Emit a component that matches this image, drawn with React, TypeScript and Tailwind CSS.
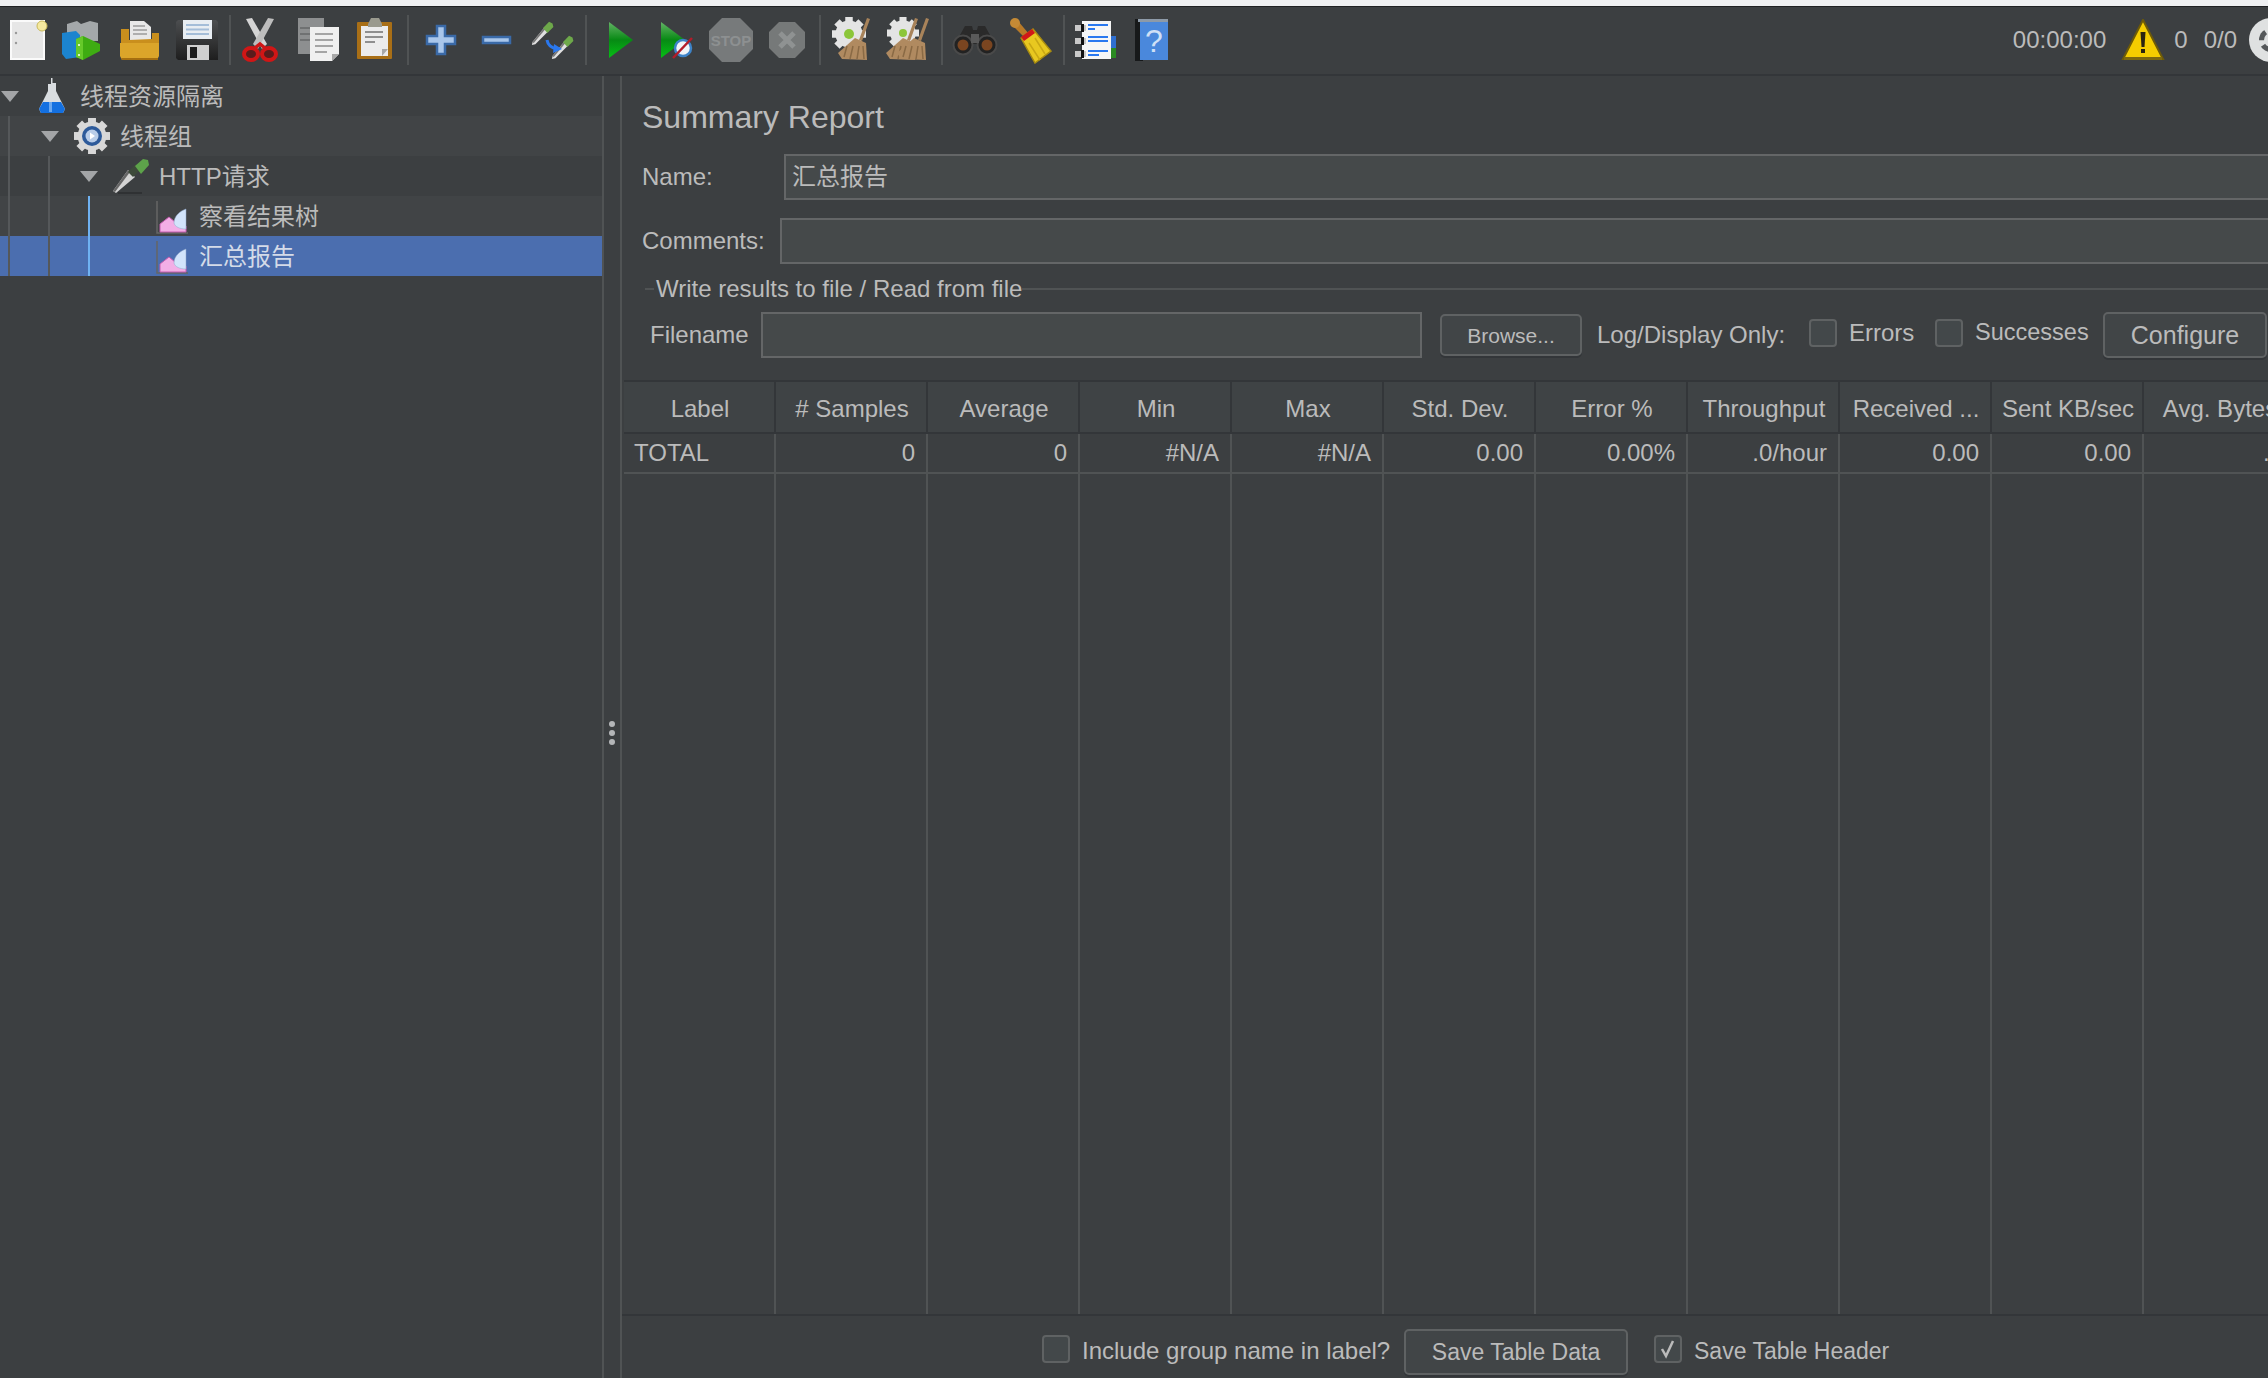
const columns = ['Label', '# Samples', 'Average', 'Min', 'Max', 'Std. Dev.', 'Error %', 'Throughput', 'Received ...', 'Sent KB/sec', 'Avg. Bytes'];
const totals = ['TOTAL', '0', '0', '#N/A', '#N/A', '0.00', '0.00%', '.0/hour', '0.00', '0.00', '.0'];

function Svg({ children, size = 48 }: { children: React.ReactNode; size?: number }) {
  return (
    <svg width={size} height={size} viewBox={`0 0 ${size} ${size}`} className="shrink-0">
      {children}
    </svg>
  );
}

function Gear({ cx, cy, r, fill = '#e4e4e4' }: { cx: number; cy: number; r: number; fill?: string }) {
  const teeth = [0, 45, 90, 135];
  return (
    <g>
      {teeth.map((a) => (
        <rect key={a} x={cx - r * 0.22} y={cy - r} width={r * 0.44} height={r * 2} fill={fill} transform={`rotate(${a} ${cx} ${cy})`} />
      ))}
      <circle cx={cx} cy={cy} r={r * 0.8} fill={fill} />
    </g>
  );
}

function Broom({ x = 0, y = 0 }: { x?: number; y?: number }) {
  return (
    <g transform={`translate(${x} ${y})`}>
      <path d="M38 2l3 1-8 22-3-1z" fill="#a8835a" />
      <path d="M26 22l11 5 1 17-25-1-4-6z" fill="#b08a60" />
      <path d="M18 30l-3 11M24 30l-3 13M30 30l-2 13M34 30l1 13" stroke="#8a6a45" strokeWidth="1.5" fill="none" />
    </g>
  );
}

function NewIcon() {
  return (
    <Svg>
      <rect x="6" y="5" width="33" height="38" fill="#e6e6e6" stroke="#fafafa" strokeWidth="2" />
      <circle cx="11" cy="17" r="1.2" fill="#999" />
      <circle cx="11" cy="27" r="1.2" fill="#999" />
      <circle cx="37" cy="10" r="5" fill="#f5e9a0" stroke="#c9b95a" strokeWidth="1" />
    </Svg>
  );
}

function TemplatesIcon() {
  return (
    <Svg>
      <g transform="translate(-2 0)">
        <path d="M8 8l10-3 4 3 9-3 8 2v18H8z" fill="#a4a8aa" />
        <path d="M3 17l14-2 4 4v22l-14 2-4-5z" fill="#1c84cf" />
        <path d="M17 23l7-3 17 8v7l-17 9-7-3z" fill="#3eac12" />
        <path d="M17 23l7-3v24l-7-3z" fill="#66c92a" />
        <circle cx="20" cy="29" r="1" fill="#fff" />
        <circle cx="20" cy="39" r="1" fill="#fff" />
      </g>
    </Svg>
  );
}

function OpenIcon() {
  return (
    <Svg>
      <g transform="translate(-2 0)">
        <path d="M15 5h14l7 6v20H15z" fill="#e8e8e8" />
        <path d="M18 10h12M18 14h14M18 18h14" stroke="#9a9a9a" strokeWidth="1.5" />
        <path d="M6 13h8v11l23-1v-6h7v22l-2 3H8l-2-3z" fill="#c98f1d" />
        <path d="M5 27h39v13l-2 4H7l-2-4z" fill="#dba52a" />
        <path d="M6 42h37v2H7z" fill="#a46e10" />
      </g>
    </Svg>
  );
}

function SaveIcon() {
  return (
    <Svg>
      <defs>
        <linearGradient id="disk" x1="0" y1="0" x2="0" y2="1">
          <stop offset="0" stopColor="#4c4e50" />
          <stop offset="1" stopColor="#1e1e1e" />
        </linearGradient>
      </defs>
      <g transform="translate(-2 0)">
        <path d="M5 6l2-2h38l2 2v38l-2 0H7l-2-2z" fill="url(#disk)" />
        <rect x="12" y="4" width="29" height="19" fill="#e8edf2" />
        <path d="M15 9h23M15 13.5h23M15 18h23" stroke="#a4bdd8" strokeWidth="2" />
        <rect x="16" y="29" width="22" height="15" fill="#cfcfcf" />
        <rect x="19" y="31" width="7" height="11" fill="#1c1c1c" />
      </g>
    </Svg>
  );
}

function CutIcon() {
  return (
    <Svg>
      <g transform="translate(-3 0)">
        <path d="M10 3l6-1 15 26-5 5z" fill="#d4d4d4" />
        <path d="M38 3l-6-1-15 26 5 5z" fill="#bdbdbd" />
        <ellipse cx="15" cy="38" rx="7" ry="6" fill="#5a1c1c" stroke="#d01616" strokeWidth="4" />
        <ellipse cx="33" cy="38" rx="7" ry="6" fill="#5a1c1c" stroke="#d01616" strokeWidth="4" />
        <path d="M19 32l5-4 5 4" stroke="#d01616" strokeWidth="3.5" fill="none" />
      </g>
    </Svg>
  );
}

function CopyIcon() {
  return (
    <Svg>
      <rect x="3" y="2" width="26" height="36" fill="#8d8f90" />
      <path d="M5 12h12M5 18h12M5 24h12" stroke="#6f7172" strokeWidth="2" />
      <path d="M15 11h29v27l-7 7H15z" fill="#f0f0f0" />
      <path d="M37 45v-7h7z" fill="#a8a8a8" />
      <path d="M20 18h18M20 24h18M20 30h18M20 36h12" stroke="#a5a5a5" strokeWidth="2" />
    </Svg>
  );
}

function PasteIcon() {
  return (
    <Svg>
      <rect x="6" y="6" width="35" height="37" rx="1" fill="#a96f16" />
      <rect x="10" y="10" width="27" height="30" fill="#ececec" />
      <path d="M31 40v-7h6z" fill="#a8a8a8" />
      <path d="M14 16h18M14 21h18M14 26h10" stroke="#8f8f8f" strokeWidth="2" />
      <path d="M17 8l3-6h8l3 6v3H17z" fill="#9a9a8e" />
    </Svg>
  );
}

function PlusIcon() {
  return (
    <Svg>
      <path d="M20 10h8v10h10v8H28v10h-8V28H10v-8h10z" fill="#a9c6ea" stroke="#3a6aa8" strokeWidth="2.5" />
    </Svg>
  );
}

function MinusIcon() {
  return (
    <Svg>
      <rect x="10" y="21" width="27" height="6" fill="#a9c6ea" stroke="#3a6aa8" strokeWidth="2.5" />
    </Svg>
  );
}

function Dropper({ x, y, s = 1 }: { x: number; y: number; s?: number }) {
  return (
    <g transform={`translate(${x} ${y}) scale(${s})`}>
      <path d="M2 24l14-17 5 4L5 27 1 28z" fill="#e0e0e0" />
      <path d="M2 24l14-17 1.5 1.5L3 26z" fill="#777" />
      <path d="M14 8l7-7 4 2 1 4-7 7z" fill="#6da84a" />
    </g>
  );
}

function MoveIcon() {
  return (
    <Svg>
      <Dropper x={2} y={5} s={0.86} />
      <Dropper x={22} y={19} s={0.86} />
      <path d="M18 24c1 6 5 8 10 9" stroke="#2a78ef" strokeWidth="3" fill="none" />
      <path d="M25 28l8 5-9 4z" fill="#2a78ef" />
    </Svg>
  );
}

function PlayIcon({ badge }: { badge?: boolean }) {
  return (
    <Svg>
      <defs>
        <linearGradient id={badge ? 'play-b' : 'play-a'} x1="0" y1="0" x2="0" y2="1">
          <stop offset="0" stopColor="#63b365" />
          <stop offset="0.5" stopColor="#078a14" />
          <stop offset="1" stopColor="#06c015" />
        </linearGradient>
      </defs>
      <path d={badge ? 'M10 6l24 18-24 18z' : 'M14 6l24 18-24 18z'} fill={`url(#${badge ? 'play-b' : 'play-a'})`} />
      {badge && (
        <g>
          <circle cx="32" cy="32" r="8" fill="#f0f4f8" stroke="#3d83c8" strokeWidth="2.5" />
          <path d="M22 42l19-20" stroke="#b31c2a" strokeWidth="2.5" />
        </g>
      )}
    </Svg>
  );
}

function StopIcon() {
  return (
    <Svg>
      <path d="M15 2h18l13 13v18L33 46H15L2 33V15z" fill="#777a7b" />
      <text x="24" y="30" textAnchor="middle" fontSize="15" fontWeight="700" fill="#8d9091" fontFamily="Liberation Sans">
        STOP
      </text>
    </Svg>
  );
}

function ShutdownIcon() {
  return (
    <Svg>
      <path d="M16 6h16l10 10v16L32 42H16L6 32V16z" fill="#767979" />
      <path d="M17 17l14 14M31 17L17 31" stroke="#8f9292" strokeWidth="5" />
    </Svg>
  );
}

function ClearIcon() {
  return (
    <Svg>
      <Gear cx={20} cy={18} r={17} />
      <circle cx={20} cy={18} r={5} fill="#8cc63a" />
      <Broom />
    </Svg>
  );
}

function ClearAllIcon() {
  return (
    <Svg>
      <Gear cx={18} cy={17} r={16} />
      <circle cx={18} cy={17} r={4} fill="#8cc63a" />
      <Broom x={-8} />
      <Broom x={3} />
    </Svg>
  );
}

function BinocularsIcon() {
  return (
    <Svg>
      <path d="M14 10h7l1 4h4l1-4h7l10 18H4z" fill="#2a2a2a" />
      <circle cx="12" cy="29" r="9.5" fill="#222" stroke="#4a4a4a" strokeWidth="2" />
      <circle cx="36" cy="29" r="9.5" fill="#222" stroke="#4a4a4a" strokeWidth="2" />
      <circle cx="12" cy="29" r="5.5" fill="#7a4520" />
      <circle cx="36" cy="29" r="5.5" fill="#7a4520" />
      <path d="M20 18h8v9h-8z" fill="#5a5a5a" />
    </Svg>
  );
}

function BroomIcon() {
  return (
    <Svg>
      <path d="M6 10l5-5 11 13-4 4z" fill="#b87a28" />
      <circle cx="8" cy="7" r="5" fill="#c58a35" />
      <path d="M14 22l12-9 18 22-16 12z" fill="#e8c820" stroke="#a88c10" strokeWidth="1.5" />
      <path d="M14 21l11-8 3 4-11 8z" fill="#d01818" />
      <path d="M22 27l11 17M28 22l10 16" stroke="#c9a814" strokeWidth="1.5" />
    </Svg>
  );
}

function ListIcon() {
  return (
    <Svg>
      <rect x="38" y="20" width="5" height="14" fill="#2f6fd0" />
      <rect x="38" y="32" width="5" height="10" fill="#2a8a22" />
      <rect x="9" y="5" width="29" height="38" fill="#f6f6f6" />
      <path d="M2 9h11v6H2zM2 22h11v6H2zM2 35h11v6H2z" fill="#c9c9c9" />
      <path d="M8 8h3v8H8zM8 21h3v8H8zM8 34h3v8H8z" fill="#111" />
      <path d="M15 9h20M15 13h7M15 21h20M15 25h20M15 35h20M15 39h11" stroke="#2a78ef" strokeWidth="2" />
    </Svg>
  );
}

function HelpIcon() {
  return (
    <Svg>
      <rect x="6" y="3" width="8" height="42" fill="#17191a" />
      <rect x="11" y="5" width="28" height="39" fill="#4a88dc" />
      <rect x="9" y="3" width="30" height="3" fill="#8d9aa8" />
      <text x="25" y="36" textAnchor="middle" fontSize="32" fill="#cfe0f6" fontFamily="Liberation Sans">
        ?
      </text>
    </Svg>
  );
}

function WarningIcon() {
  return (
    <svg width="44" height="42" viewBox="0 0 44 42" className="shrink-0">
      <path d="M22 1L42 40H2z" fill="#f5cd00" stroke="#6d5a08" strokeWidth="2" />
      <path d="M3 38h38v3H3z" fill="#7c6810" />
      <path d="M19.5 13h5l-1 15h-3z" fill="#2a2410" />
      <rect x="20" y="30" width="4" height="4" fill="#2a2410" />
    </svg>
  );
}

function FlaskIcon() {
  return (
    <Svg size={36}>
      <path d="M17 0h1.5v5H22v8l9 18-2 4H7l-2-4 9-18V6h3z" fill="#d9dde0" />
      <path d="M9 24h18l4 7-2 4H7l-2-4z" fill="#1470e0" />
      <path d="M15 24h3v10h-3z" fill="#6aa8f0" />
    </Svg>
  );
}

function GearIcon() {
  return (
    <Svg size={36}>
      <Gear cx={18} cy={18} r={18} fill="#d8d8d8" />
      <circle cx="18" cy="18" r="10" fill="#2d5a9a" />
      <circle cx="18" cy="18" r="6.5" fill="#b9cde8" />
      <path d="M16 14.5l5 3.5-5 3.5z" fill="#fff" />
    </Svg>
  );
}

function PipetteIcon() {
  return (
    <Svg size={36}>
      <path d="M0 33l15-21 7 7L3 35z" fill="#d4d4d4" />
      <path d="M0 33l15-21 2 2L2 34z" fill="#666" />
      <path d="M15 14l7-7 5 5-7 7z" fill="#3d4a3a" />
      <path d="M22 8l8-7 5 1 1 5-8 9z" fill="#5da34a" />
      <path d="M5 35h24" stroke="#2f3133" strokeWidth="2" />
    </Svg>
  );
}

function GraphIcon() {
  return (
    <Svg size={36}>
      <g transform="translate(3 0)">
        <path d="M1 3v32h31" stroke="#666" strokeWidth="1.5" fill="none" />
        <path d="M4 34v-8l9-7 6 5 6 4 5 0v6z" fill="#f3aee6" stroke="#c45db0" strokeWidth="1" />
        <path d="M18 25c0-7 6-12 12-14v20c-6 0-11-2-12-6z" fill="#d2e4fb" stroke="#8fa6c8" strokeWidth="0.5" />
      </g>
    </Svg>
  );
}

const toolbar = [
  [NewIcon, TemplatesIcon, OpenIcon, SaveIcon],
  [CutIcon, CopyIcon, PasteIcon],
  [PlusIcon, MinusIcon, MoveIcon],
  [PlayIcon, () => <PlayIcon badge />, StopIcon, ShutdownIcon],
  [ClearIcon, ClearAllIcon],
  [BinocularsIcon, BroomIcon],
  [ListIcon, HelpIcon],
];

function Toolbar() {
  return (
    <header className="flex h-[69px] shrink-0 items-center overflow-hidden border-b-2 border-[#333639] pb-px pl-px">
      {toolbar.map((group, i) => (
        <div key={i} className="flex items-center">
          {i > 0 && <div className="mx-[4px] h-[50px] w-[2px] bg-[#505354]" />}
          {group.map((Icon, j) => (
            <div key={j} className="flex w-[56px] justify-center">
              <Icon />
            </div>
          ))}
        </div>
      ))}
      <div className="ml-auto flex items-center">
        <span>00:00:00</span>
        <div className="ml-[15px]">
          <WarningIcon />
        </div>
        <span className="ml-[9px]">0</span>
        <span className="ml-[16px]">0/0</span>
        <div className="relative ml-[12px] h-[44px] w-[19px] overflow-hidden">
          <div className="absolute left-0 top-0 h-[44px] w-[44px] rounded-full bg-[#dfe1e1]">
            <div className="absolute left-[10px] top-[10px] h-[24px] w-[24px] rounded-full border-[5px] border-dashed border-[#55585a]" />
          </div>
        </div>
      </div>
    </header>
  );
}

type TreeRowProps = {
  label: string;
  icon: React.ReactNode;
  indent: string;
  caret?: boolean;
  shaded?: boolean;
  selected?: boolean;
  guides: number;
};

function TreeRow({ label, icon, indent, caret, shaded, selected, guides }: TreeRowProps) {
  return (
    <div className={`relative flex h-[40px] items-center ${indent} ${selected ? 'bg-[#4b6eaf] text-[#d4dbe8]' : shaded ? 'bg-[#414446]' : ''}`}>
      {guides > 0 && <div className="absolute bottom-0 left-[8px] top-0 w-[2px] bg-[#55585a]" />}
      {guides > 1 && <div className="absolute bottom-0 left-[48px] top-0 w-[2px] bg-[#55585a]" />}
      {guides > 2 && <div className="absolute bottom-0 left-[88px] top-0 w-[2px] bg-[#6fb2f2]" />}
      <div className="flex w-[18px] justify-center">
        {caret && <div className="h-0 w-0 border-x-[9px] border-t-[11px] border-x-transparent border-t-[#a3a5a7]" />}
      </div>
      <div className="ml-[15px] flex w-[36px] justify-center">{icon}</div>
      <span className="ml-[10px] pt-[2px]">{label}</span>
    </div>
  );
}

function Tree() {
  return (
    <aside className="w-[602px] shrink-0">
      <TreeRow label="线程资源隔离" icon={<FlaskIcon />} indent="pl-[1px]" caret guides={0} />
      <TreeRow label="线程组" icon={<GearIcon />} indent="pl-[41px]" caret shaded guides={1} />
      <TreeRow label="HTTP请求" icon={<PipetteIcon />} indent="pl-[80px]" caret guides={2} />
      <TreeRow label="察看结果树" icon={<GraphIcon />} indent="pl-[120px]" shaded guides={3} />
      <TreeRow label="汇总报告" icon={<GraphIcon />} indent="pl-[120px]" selected guides={3} />
    </aside>
  );
}

function Splitter() {
  return (
    <div className="flex w-[20px] shrink-0 flex-col items-center justify-center gap-[3px] border-x-2 border-[#505354] pt-[12px]">
      <div className="h-[6px] w-[6px] rounded-full bg-[#b4b6b8]" />
      <div className="h-[6px] w-[6px] rounded-full bg-[#b4b6b8]" />
      <div className="h-[6px] w-[6px] rounded-full bg-[#b4b6b8]" />
    </div>
  );
}

function Input({ className, value }: { className: string; value?: string }) {
  return (
    <div className={`flex h-[46px] items-center border-2 border-[#646667] bg-[#45494a] pl-[6px] ${className}`}>
      {value}
    </div>
  );
}

function Checkbox({ checked, className = '' }: { checked?: boolean; className?: string }) {
  return (
    <div className={`flex h-[28px] w-[28px] shrink-0 items-center justify-center rounded-[4px] border-2 border-[#5f6263] bg-[#43484a] ${className}`}>
      {checked && (
        <svg width="20" height="20" viewBox="0 0 20 20">
          <path d="M4 10l4 7 7-15" stroke="#bbbbbb" strokeWidth="2.5" fill="none" />
        </svg>
      )}
    </div>
  );
}

function Button({ children, className }: { children: React.ReactNode; className: string }) {
  return (
    <div className={`flex shrink-0 items-center justify-center rounded-[5px] border-2 border-[#5f6263] bg-[#414547] shadow-[0_2px_0_#333639] ${className}`}>
      {children}
    </div>
  );
}

function ReportTable() {
  return (
    <div className="flex min-h-0 flex-1 flex-col overflow-hidden pl-[2px]">
      <div className="flex h-[54px] shrink-0 border-y-2 border-[#333639] bg-[#3f4345]">
        {columns.map((c) => (
          <div key={c} className="flex w-[152px] shrink-0 items-center justify-center whitespace-nowrap border-r-2 border-[#333639] pl-[2px] pt-[4px]">
            {c}
          </div>
        ))}
      </div>
      <div className="flex h-[40px] shrink-0 border-b-2 border-[#505354]">
        {totals.map((v, i) => (
          <div key={i} className={`flex w-[152px] shrink-0 items-center border-r-2 border-[#505354] ${i === 0 ? 'pl-[10px]' : 'justify-end pr-[11px]'}`}>
            {v}
          </div>
        ))}
      </div>
      <div className="flex flex-1">
        {columns.map((c) => (
          <div key={c} className="w-[152px] shrink-0 border-r-2 border-[#505354]" />
        ))}
      </div>
    </div>
  );
}

function ReportPanel() {
  return (
    <section className="flex min-w-0 flex-1 flex-col overflow-hidden">
      <h1 className="flex h-[78px] shrink-0 items-center pl-[20px] pt-[4px] text-[32px]">Summary Report</h1>

      <div className="flex shrink-0 items-center pl-[20px]">
        <span className="w-[142px]">Name:</span>
        <Input className="flex-1 border-r-0" value="汇总报告" />
      </div>

      <div className="mt-[18px] flex shrink-0 items-center pl-[20px]">
        <span className="w-[138px]">Comments:</span>
        <Input className="flex-1 border-r-0" />
      </div>

      <div className="flex h-[48px] shrink-0 items-center pl-[23px] pt-[2px]">
        <div className="h-[2px] w-[9px] bg-[#505354]" />
        <span className="ml-[2px]">Write results to file / Read from file</span>
        <div className="h-[2px] flex-1 bg-[#505354]" />
      </div>

      <div className="flex h-[46px] shrink-0 items-center whitespace-nowrap pl-[28px]">
        <span className="w-[111px] shrink-0">Filename</span>
        <Input className="w-[661px] shrink-0" />
        <Button className="ml-[18px] h-[42px] w-[142px] text-[21px]">Browse...</Button>
        <span className="ml-[15px] w-[212px] shrink-0">Log/Display Only:</span>
        <Checkbox className="-mt-[4px]" />
        <span className="ml-[12px] -mt-[4px] w-[74px] shrink-0">Errors</span>
        <Checkbox className="ml-[12px] -mt-[4px]" />
        <span className="ml-[12px] -mt-[4px] w-[116px] shrink-0 text-[23.5px]">Successes</span>
        <Button className="ml-[12px] h-[46px] w-[164px] text-[25px]">Configure</Button>
      </div>

      <div className="mt-[22px] flex min-h-0 flex-1 flex-col">
        <ReportTable />
        <footer className="flex h-[64px] shrink-0 items-center whitespace-nowrap border-t-2 border-[#333639] pl-[420px] pt-[10px]">
          <Checkbox className="-mt-[6px]" />
          <span className="ml-[12px] -mt-[2px] w-[307px] shrink-0">Include group name in label?</span>
          <Button className="ml-[15px] h-[46px] w-[224px] text-[23px]">Save Table Data</Button>
          <Checkbox checked className="ml-[26px] -mt-[6px]" />
          <span className="ml-[12px] -mt-[2px] text-[23px]">Save Table Header</span>
        </footer>
      </div>
    </section>
  );
}

export default function App() {
  return (
    <div className="flex h-[1378px] w-[2268px] flex-col overflow-hidden bg-[#3c3f41] font-['Liberation_Sans','Noto_Sans_CJK_SC',sans-serif] text-[24px] leading-none text-[#bbbbbb]">
      <div className="h-[7px] shrink-0 border-b border-[#1f2123] bg-[#eff0f2]" />
      <Toolbar />
      <main className="flex min-h-0 flex-1">
        <Tree />
        <Splitter />
        <ReportPanel />
      </main>
    </div>
  );
}
